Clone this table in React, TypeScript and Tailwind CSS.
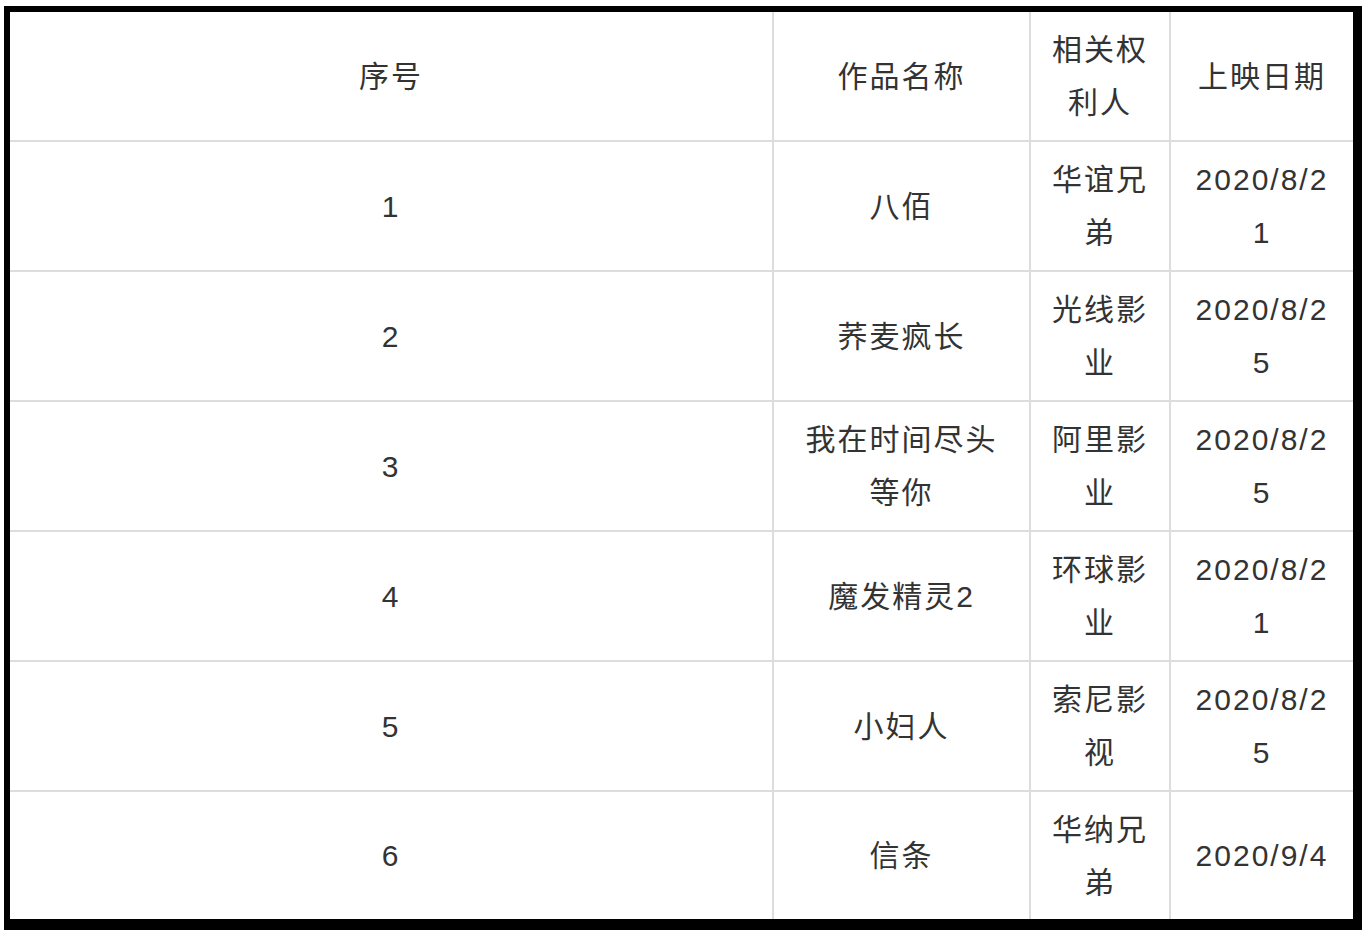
const rows: { no: string; title: string[]; owner: string[]; date: string[] }[] = [
  { no: "1", title: ["八佰"], owner: ["华谊兄", "弟"], date: ["2020/8/2", "1"] },
  { no: "2", title: ["荞麦疯长"], owner: ["光线影", "业"], date: ["2020/8/2", "5"] },
  { no: "3", title: ["我在时间尽头", "等你"], owner: ["阿里影", "业"], date: ["2020/8/2", "5"] },
  { no: "4", title: ["魔发精灵2"], owner: ["环球影", "业"], date: ["2020/8/2", "1"] },
  { no: "5", title: ["小妇人"], owner: ["索尼影", "视"], date: ["2020/8/2", "5"] },
  { no: "6", title: ["信条"], owner: ["华纳兄", "弟"], date: ["2020/9/4"] },
];

function Lines({ lines }: { lines: string[] }) {
  return (
    <div className="flex flex-col items-center">
      {lines.map((l, i) => (
        <span key={i} className="whitespace-nowrap">
          {l}
        </span>
      ))}
    </div>
  );
}

function Cell({ lines, last, bottom }: { lines: string[]; last?: boolean; bottom?: boolean }) {
  return (
    <div
      className={[
        "flex items-center justify-center border-[#dddddd]",
        last ? "" : "border-r-2",
        bottom ? "" : "border-b-2",
      ].join(" ")}
    >
      <Lines lines={lines} />
    </div>
  );
}

export default function App() {
  return (
    <div className="h-[930px] w-[1362px] overflow-hidden bg-white pl-[4px] pt-[6px]">
      <div className="h-[924px] w-[1358px] bg-black pb-[11px] pl-[6px] pr-[9px] pt-[6px]">
        <div
          className="grid h-[907px] w-[1343px] grid-cols-[764px_257px_140px_182px] grid-rows-[130px_130px_130px_130px_130px_130px_127px] bg-white text-[30px] leading-[53px] tracking-[2px] text-[#333333]"
          style={{ fontFamily: '"Liberation Sans", "Noto Sans CJK SC", sans-serif' }}
        >
          <Cell lines={["序号"]} />
          <Cell lines={["作品名称"]} />
          <Cell lines={["相关权", "利人"]} />
          <Cell lines={["上映日期"]} last />
          {rows.map((r, i) => {
            const bottom = i === rows.length - 1;
            return [
              <Cell key={`${r.no}-a`} lines={[r.no]} bottom={bottom} />,
              <Cell key={`${r.no}-b`} lines={r.title} bottom={bottom} />,
              <Cell key={`${r.no}-c`} lines={r.owner} bottom={bottom} />,
              <Cell key={`${r.no}-d`} lines={r.date} bottom={bottom} last />,
            ];
          })}
        </div>
      </div>
    </div>
  );
}
